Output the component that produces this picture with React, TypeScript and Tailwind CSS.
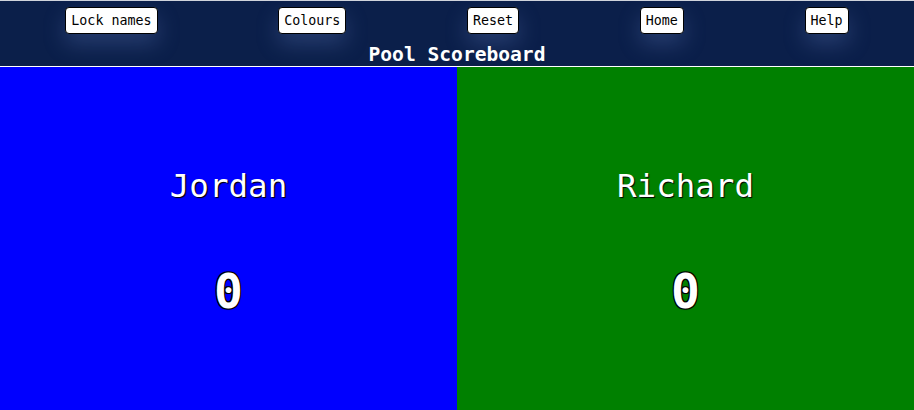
import React, { useState } from 'react'

const MONO = "font-['DejaVu_Sans_Mono',monospace]"

type Player = { name: string; score: number; bg: string }

const NAV = ['Lock names', 'Colours', 'Reset', 'Home', 'Help']

function NavButton({ label }: { label: string }) {
  return (
    <button
      type="button"
      className={`${MONO} rounded-[4px] border border-black bg-white px-[5px] py-[5px] text-[13.33px] leading-[15px] text-black shadow-[0_10px_22px_rgba(110,140,210,0.28)]`}
    >
      {label}
    </button>
  )
}

function Panel({ player }: { player: Player }) {
  return (
    <div className={`flex flex-1 flex-col items-center justify-center gap-[58px] pt-[10px] ${player.bg}`}>
      <div className={`${MONO} text-[32.5px] leading-[37px] text-white [text-shadow:1px_1px_1px_#000]`}>
        {player.name}
      </div>
      <div
        className={`${MONO} text-[48px] font-bold leading-[56px] text-white [text-shadow:-1px_-1px_0_#000,1px_-1px_0_#000,-1px_1px_0_#000,1px_1px_0_#000,0_0_2px_#000]`}
      >
        {player.score}
      </div>
    </div>
  )
}

export default function App() {
  const [players] = useState<Player[]>([
    { name: 'Jordan', score: 0, bg: 'bg-[#0000ff]' },
    { name: 'Richard', score: 0, bg: 'bg-[#008000]' },
  ])

  return (
    <div className="flex h-[410px] w-full flex-col overflow-hidden bg-black">
      {/* Header */}
      <header className="h-[67px] border-t border-[#d0d4dc] border-b border-b-white bg-[#0b1f4a]">
        <nav className="flex justify-around px-[5px] pt-[6px]">
          {NAV.map(l => (
            <NavButton key={l} label={l} />
          ))}
        </nav>
        <h1 className={`${MONO} mt-[9px] text-center text-[19.6px] font-bold leading-[23px] text-white`}>
          Pool Scoreboard
        </h1>
      </header>

      {/* Players */}
      <main className="flex flex-1">
        {players.map(p => (
          <Panel key={p.name} player={p} />
        ))}
      </main>
    </div>
  )
}
